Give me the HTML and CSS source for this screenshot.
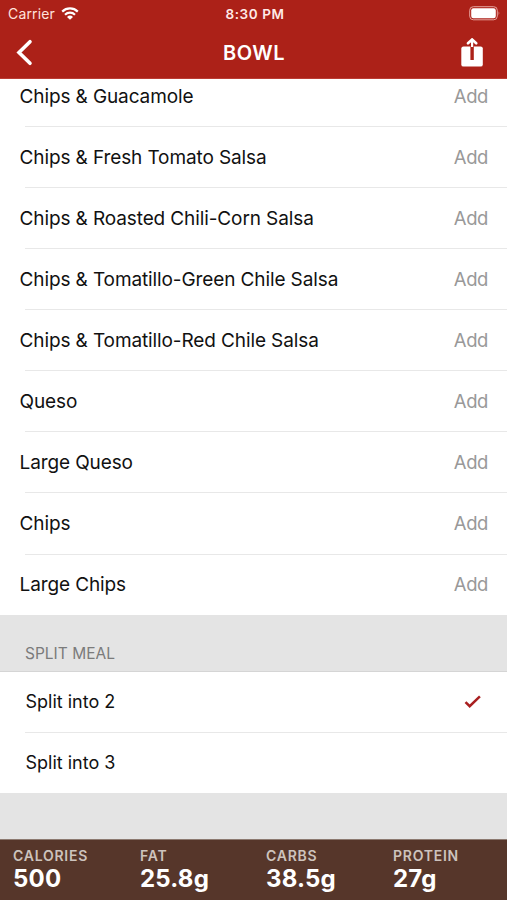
FILE: index.html
```html
<!DOCTYPE html>
<html lang="en">
<head>
<meta charset="utf-8">
<meta name="viewport" content="width=device-width, initial-scale=1">
<title>Bowl</title>
<link rel="stylesheet" href="styles.css">
</head>
<body>
<div class="app">
  <header class="header">
    <div class="status">
      <div class="status-left"><span class="carrier">Carrier</span>
        <svg class="wifi" width="18" height="14" viewBox="0 0 18 14" fill="none" stroke="#fff" stroke-width="2.2"><path d="M1.2 4.6a11.2 11.2 0 0 1 15.6 0M4 7.7a7.2 7.2 0 0 1 10 0"/><path d="M9 12.8 6 10a4.4 4.4 0 0 1 6 0z" fill="#fff" stroke="none"/></svg>
      </div>
      <span class="time">8:30 PM</span>
      <svg class="battery" width="32" height="15" viewBox="0 0 32 15"><rect x=".7" y=".7" width="27.6" height="13.1" rx="3.6" fill="none" stroke="#e6a29c" stroke-width="1"/><rect x="2.2" y="2.2" width="24.6" height="10.1" rx="2.2" fill="#fff"/><path d="M29.6 5.2q1.8 2 0 4.2z" fill="#e6a29c"/></svg>
    </div>
    <nav class="nav">
      <svg class="back" width="18" height="28" viewBox="0 0 18 28" fill="none" stroke="#fff" stroke-width="3.6" stroke-linecap="round"><path d="M15 2.7 4 13.5l11 10.8"/></svg>
      <h1 class="title">BOWL</h1>
      <svg class="share" width="24" height="30" viewBox="0 0 24 30"><rect x="1.3" y="8.4" width="21.5" height="20.2" rx="2.2" fill="#fff"/><path d="M10.4 7h3.4v15h-3.4z" fill="#ac2118"/><path d="M12.1 1.5v7.5" stroke="#fff" stroke-width="2.2"/><path d="M8 5.3 12.1 1.5l4.1 3.8" fill="none" stroke="#fff" stroke-width="2.6" stroke-linecap="round"/></svg>
    </nav>
  </header>
  <main class="list">
    <div class="row"><span class="name">Chips &amp; Guacamole</span><span class="add">Add</span></div>
    <div class="row"><span class="name">Chips &amp; Fresh Tomato Salsa</span><span class="add">Add</span></div>
    <div class="row"><span class="name">Chips &amp; Roasted Chili-Corn Salsa</span><span class="add">Add</span></div>
    <div class="row"><span class="name">Chips &amp; Tomatillo-Green Chile Salsa</span><span class="add">Add</span></div>
    <div class="row"><span class="name">Chips &amp; Tomatillo-Red Chile Salsa</span><span class="add">Add</span></div>
    <div class="row"><span class="name">Queso</span><span class="add">Add</span></div>
    <div class="row"><span class="name">Large Queso</span><span class="add">Add</span></div>
    <div class="row"><span class="name">Chips</span><span class="add">Add</span></div>
    <div class="row"><span class="name">Large Chips</span><span class="add">Add</span></div>
  </main>
  <h2 class="section">SPLIT MEAL</h2>
  <div class="split">
    <div class="row"><span class="option">Split into 2</span><svg class="check" width="18" height="14" viewBox="0 0 18 14" fill="none" stroke="#a91f20" stroke-width="2.5"><path d="M1.5 7.1 5.7 11.2 15.9 1.4"/></svg></div>
    <div class="row"><span class="option">Split into 3</span></div>
  </div>
  <footer class="totals">
    <div class="total"><span class="label">CALORIES</span><span class="value">500</span></div>
    <div class="total"><span class="label">FAT</span><span class="value">25.8g</span></div>
    <div class="total"><span class="label">CARBS</span><span class="value">38.5g</span></div>
    <div class="total"><span class="label">PROTEIN</span><span class="value">27g</span></div>
  </footer>
</div>
</body>
</html>
```
FILE: styles.css
```css
* { box-sizing: border-box; }
body { margin: 0; font-family: Inter, "Liberation Sans", sans-serif; color: #111; }
svg { display: block; flex: none; }
.app { display: flex; flex-direction: column; width: 507px; height: 900px; background: #e4e4e4; overflow: hidden; }
.header { flex: none; height: 79px; background: #ac2118; color: #fff; border-bottom: 1px solid #bb3d34; }
.status { display: grid; grid-template-columns: 1fr auto 1fr; align-items: center; height: 27px; padding: 0 6px 0 8px; }
.status-left { display: flex; align-items: center; gap: 6px; }
.carrier { font-size: 14px; letter-spacing: 0.15px; color: #ffe3dd; }
.time { margin-left: 1px; font-size: 13.5px; font-weight: 600; letter-spacing: 0.55px; color: #ffeae6; }
.battery { justify-self: end; }
.nav { display: grid; grid-template-columns: 1fr auto 1fr; align-items: center; height: 51px; padding: 0 23px 0 15px; }
.title { margin: 0 0 0 9px; font-size: 20px; font-weight: 600; line-height: 24px; letter-spacing: 0.5px; }
.share { justify-self: end; }
.list { flex: none; display: flex; flex-direction: column; justify-content: flex-end; height: 536px; overflow: hidden; background: #fff; }
.row { position: relative; flex: none; display: flex; align-items: center; justify-content: space-between; height: 61.1px; padding: 2px 19px 0 19.5px; font-size: 19px; line-height: 24px; }
.row:not(:last-child)::after { content: ""; position: absolute; left: 25px; right: 0; bottom: -0.6px; height: 1px; background: #e8e8e8; }
.name { letter-spacing: -0.11px; }
.add { padding-bottom: 2px; font-size: 18.5px; letter-spacing: -0.4px; color: #999; }
.section { flex: none; display: flex; align-items: flex-end; margin: 0; height: 57px; padding: 0 25px 7px; font-size: 15.5px; font-weight: 400; line-height: 20px; color: #7b7b7b; border-bottom: 1px solid #d5d5d5; }
.split { background: #fff; flex: none; height: 121px; }
.split .row { padding: 0 19px 0 25.5px; height: 60.5px; }
.split .row::after { bottom: 0; }
.option { font-size: 18px; }
.check { margin-right: 6px; }
.totals { display: grid; grid-template-columns: 127px 126px 127px 1fr; align-content: start; height: 61px; margin-top: auto; padding: 8px 0 0 13px; background: #56362a; border-top: 1px solid #8c7970; color: #fff; }
.total { display: flex; flex-direction: column; }
.label { font-size: 14px; font-weight: 600; line-height: 16px; letter-spacing: 0.75px; color: #cdc3bd; }
.value { font-size: 24px; font-weight: 700; line-height: 30px; letter-spacing: 0.2px; }
```
